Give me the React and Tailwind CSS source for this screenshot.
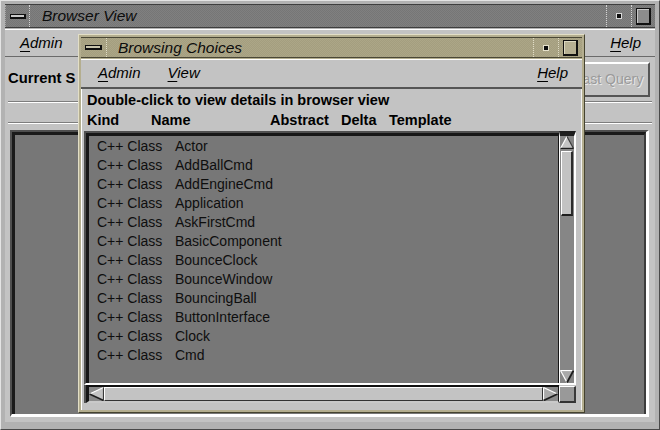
import React from "react";

const rows = [
  "Actor",
  "AddBallCmd",
  "AddEngineCmd",
  "Application",
  "AskFirstCmd",
  "BasicComponent",
  "BounceClock",
  "BounceWindow",
  "BouncingBall",
  "ButtonInterface",
  "Clock",
  "Cmd",
];

function Mn({ children }) {
  return <span className="underline decoration-1 underline-offset-[3px]">{children}</span>;
}

function UpArrow() {
  return (
    <svg width="14" height="13" viewBox="0 0 14 13" className="block">
      <polygon points="7,0.5 13.5,12.5 0.5,12.5" fill="#c4c4c4" />
      <line x1="7" y1="0.5" x2="0.5" y2="12.5" stroke="#ffffff" strokeWidth="1.2" />
      <line x1="7" y1="0.5" x2="13.5" y2="12.5" stroke="#3a3a3a" strokeWidth="1.2" />
      <line x1="0.5" y1="12.5" x2="13.5" y2="12.5" stroke="#1e1e1e" strokeWidth="1.4" />
    </svg>
  );
}

function DownArrow() {
  return (
    <svg width="14" height="13" viewBox="0 0 14 13" className="block">
      <polygon points="0.5,0.5 13.5,0.5 7,12.5" fill="#a9a9a9" />
      <line x1="0.5" y1="0.5" x2="13.5" y2="0.5" stroke="#ffffff" strokeWidth="1.2" />
      <line x1="0.5" y1="0.5" x2="7" y2="12.5" stroke="#ffffff" strokeWidth="1.2" />
      <line x1="13.5" y1="0.5" x2="7" y2="12.5" stroke="#1e1e1e" strokeWidth="1.8" />
    </svg>
  );
}

function LeftArrow() {
  return (
    <svg width="15" height="14" viewBox="0 0 15 14" className="block">
      <polygon points="0.5,7 14.5,0.5 14.5,13.5" fill="#c4c4c4" />
      <line x1="0.5" y1="7" x2="14.5" y2="0.5" stroke="#ffffff" strokeWidth="1.2" />
      <line x1="0.5" y1="7" x2="14.5" y2="13.5" stroke="#1e1e1e" strokeWidth="1.6" />
      <line x1="14.5" y1="0.5" x2="14.5" y2="13.5" stroke="#3a3a3a" strokeWidth="1.2" />
    </svg>
  );
}

function RightArrow() {
  return (
    <svg width="15" height="14" viewBox="0 0 15 14" className="block">
      <polygon points="0.5,0.5 14.5,7 0.5,13.5" fill="#a9a9a9" />
      <line x1="0.5" y1="0.5" x2="0.5" y2="13.5" stroke="#ffffff" strokeWidth="1.2" />
      <line x1="0.5" y1="0.5" x2="14.5" y2="7" stroke="#ffffff" strokeWidth="1.2" />
      <line x1="0.5" y1="13.5" x2="14.5" y2="7" stroke="#1e1e1e" strokeWidth="1.8" />
    </svg>
  );
}

function OuterTitle() {
  return (
    <div className="flex h-[24px] border-t border-b border-[#3e3e3e] bg-[#7b7b7b] bg-[image:repeating-conic-gradient(#808080_0_25%,#767676_0_50%)] bg-[length:2px_2px]">
      <div className="flex w-[25px] items-center justify-center border-r border-dotted border-r-[#d4d4d4] border-l border-l-[#a8a8a8]">
        <div className="h-[5px] w-[16px] border border-[#101010] border-b-2 border-r-2 bg-[#c9c9c9]" />
      </div>
      <div className="flex flex-1 items-center pl-[12px] text-[15.5px] italic leading-none text-[#0c0c0c]">
        Browser View
      </div>
      <div className="flex w-[25px] items-center justify-center border-l border-dotted border-l-[#d4d4d4]">
        <div className="h-[4px] w-[4px] bg-[#0c0c0c] shadow-[0_0_0_1px_#dadada]" />
      </div>
      <div className="flex w-[24px] items-center justify-center border-l border-dotted border-l-[#d4d4d4]">
        <div className="h-[17px] w-[15px] border border-[#111] border-b-2 border-r-2 bg-[#8c8c8c] shadow-[inset_1px_1px_0_#c8c8c8]" />
      </div>
    </div>
  );
}

function InnerTitle() {
  return (
    <div className="flex h-[21px] border-t border-b border-[#4a4736] bg-[#a8a283] bg-[image:repeating-conic-gradient(#aca687_0_25%,#a49e7f_0_50%)] bg-[length:2px_2px]">
      <div className="flex w-[26px] items-center justify-center border-r border-dotted border-r-[#e0dcc6]">
        <div className="h-[5px] w-[17px] border border-[#101010] border-b-2 border-r-2 bg-[#c9c5ad]" />
      </div>
      <div className="flex flex-1 items-center pl-[11px] text-[15.5px] italic leading-none text-[#0c0c0c]">
        Browsing Choices
      </div>
      <div className="flex w-[25px] items-center justify-center border-l border-dotted border-l-[#e0dcc6]">
        <div className="h-[4px] w-[4px] bg-[#0c0c0c] shadow-[0_0_0_1px_#e6e2cc]" />
      </div>
      <div className="flex w-[24px] items-center justify-center border-l border-dotted border-l-[#e0dcc6]">
        <div className="h-[16px] w-[15px] border border-[#111] border-b-2 border-r-2 bg-[#b6b093] shadow-[inset_1px_1px_0_#dcd8c0]" />
      </div>
    </div>
  );
}

function ListBox() {
  return (
    <div className="flex flex-col">
      <div className="flex h-[254px]">
        <div className="w-[475px] border-t-2 border-l-2 border-t-[#505050] border-l-[#505050] border-b-2 border-b-white">
          <div className="h-full border-t-[3px] border-l-[3px] border-r border-[#161616] bg-[#777777] pl-[8px] pt-[1px] text-[14px] leading-[19px] text-[#0e0e0e]">
            {rows.map((r) => (
              <div key={r} className="flex">
                <span className="w-[78px]">C++ Class</span>
                <span>{r}</span>
              </div>
            ))}
          </div>
        </div>
        <div className="flex w-[17px] flex-col border-t-[5px] border-t-[#1c1c1c] border-l border-l-white border-r-2 border-r-white border-b-2 border-b-white bg-[#868686]">
          <UpArrow />
          <div className="mt-[2px] ml-[1px] h-[65px] w-[12px] border-t border-l border-white border-b-2 border-r-2 border-b-[#1e1e1e] border-r-[#2a2a2a] bg-[#c3c3c3]" />
          <div className="flex-1" />
          <DownArrow />
        </div>
      </div>
      <div className="flex h-[18px]">
        <div className="w-[475px] border-l-2 border-l-[#505050]">
          <div className="flex h-full border-t-2 border-t-[#111] border-l-[3px] border-l-[#161616] border-r border-r-[#161616] border-b-2 border-b-[#c9c9c9] bg-[#8a8a8a]">
            <LeftArrow />
            <div className="flex-1 border-t border-l border-white border-b border-r border-b-[#333] border-r-[#333] bg-[#c3c3c3]" />
            <RightArrow />
          </div>
        </div>
        <div className="mt-[1px] h-[17px] w-[17px] border-t border-l border-white border-b-2 border-r-2 border-b-[#333] border-r-[#3a3a3a] bg-[#999999]" />
      </div>
    </div>
  );
}

export default function App() {
  return (
    <div className="relative flex h-[430px] w-[660px] flex-col overflow-hidden border border-t-[#e4e4e4] border-l-[#e4e4e4] border-b-[#4a4a4a] border-r-[#4a4a4a] bg-[#b2b2b2] px-[4px] pt-[3px] pb-[7px] font-['Liberation_Sans',Arial,Helvetica,sans-serif] text-black">
      <OuterTitle />
      {/* outer menubar */}
      <div className="mt-[1px] flex h-[28px] items-center border-t border-t-white border-b border-b-[#6a6a6a] bg-[#c3c3c3] pl-[15px] pr-[14px] text-[15px] italic">
        <span>
          <Mn>A</Mn>dmin
        </span>
        <span className="ml-auto">
          <Mn>H</Mn>elp
        </span>
      </div>
      {/* outer body */}
      <div className="flex flex-1 flex-col bg-[#c3c3c3]">
        <div className="flex h-[44px] items-start">
          <span className="ml-[3px] mt-[13px] whitespace-nowrap text-[14.8px] font-bold leading-[17px]">Current S</span>
          <div className="ml-auto mr-[5px] mt-[5px] flex h-[35px] w-[82px] items-center justify-center border-t-2 border-l-2 border-white border-b-2 border-r-2 border-b-[#555] border-r-[#555] bg-[#c3c3c3] text-[14px] text-[#9a9a9a] [text-shadow:1px_1px_0_#e8e8e8]">
            Last Query
          </div>
        </div>
        <div className="mx-[3px] h-[2px] border-t border-t-[#7d7d7d] border-b border-b-white" />
        <div className="mx-[3px] mt-[19px] h-[2px] border-t border-t-[#7d7d7d] border-b border-b-white" />
        <div className="mt-[6px] mb-[5px] ml-[5px] mr-[6px] flex flex-1 flex-col border-t-2 border-l-2 border-t-[#4f4f4f] border-l-[#4f4f4f] border-r-[3px] border-b-[3px] border-r-white border-b-white">
          <div className="flex-1 border-t-[3px] border-l-[3px] border-[#1a1a1a] border-r-2 border-r-[#3c3c3c] bg-[#777777]" />
        </div>
      </div>

      {/* inner window: Browsing Choices */}
      <div className="absolute left-[77px] top-[33px] flex h-[379px] w-[507px] flex-col border border-t-[#e2dec6] border-l-[#e2dec6] border-b-[#45432f] border-r-[#45432f] bg-[#b4ae8f] p-[2px]">
        <InnerTitle />
        <div className="mt-[1px] flex h-[30px] items-center border-t border-t-white border-b-2 border-b-[#555] bg-[#c3c3c3] pl-[17px] pr-[14px] text-[15px] italic">
          <span>
            <Mn>A</Mn>dmin
          </span>
          <span className="ml-[27px]">
            <Mn>V</Mn>iew
          </span>
          <span className="ml-auto">
            <Mn>H</Mn>elp
          </span>
        </div>
        <div className="flex flex-1 flex-col border-l border-l-white border-r border-r-[#f2f2f2] bg-[#c3c3c3]">
          <div className="pl-[5px] pt-[1px] pb-[1px] text-[14.5px] font-bold leading-[20px]">
            <div>Double-click to view details in browser view</div>
            <div className="flex">
              <span className="w-[64px]">Kind</span>
              <span className="w-[119px]">Name</span>
              <span className="w-[71px]">Abstract</span>
              <span className="w-[48px]">Delta</span>
              <span>Template</span>
            </div>
          </div>
          <div className="ml-[2px]">
            <ListBox />
          </div>
        </div>
      </div>
    </div>
  );
}
